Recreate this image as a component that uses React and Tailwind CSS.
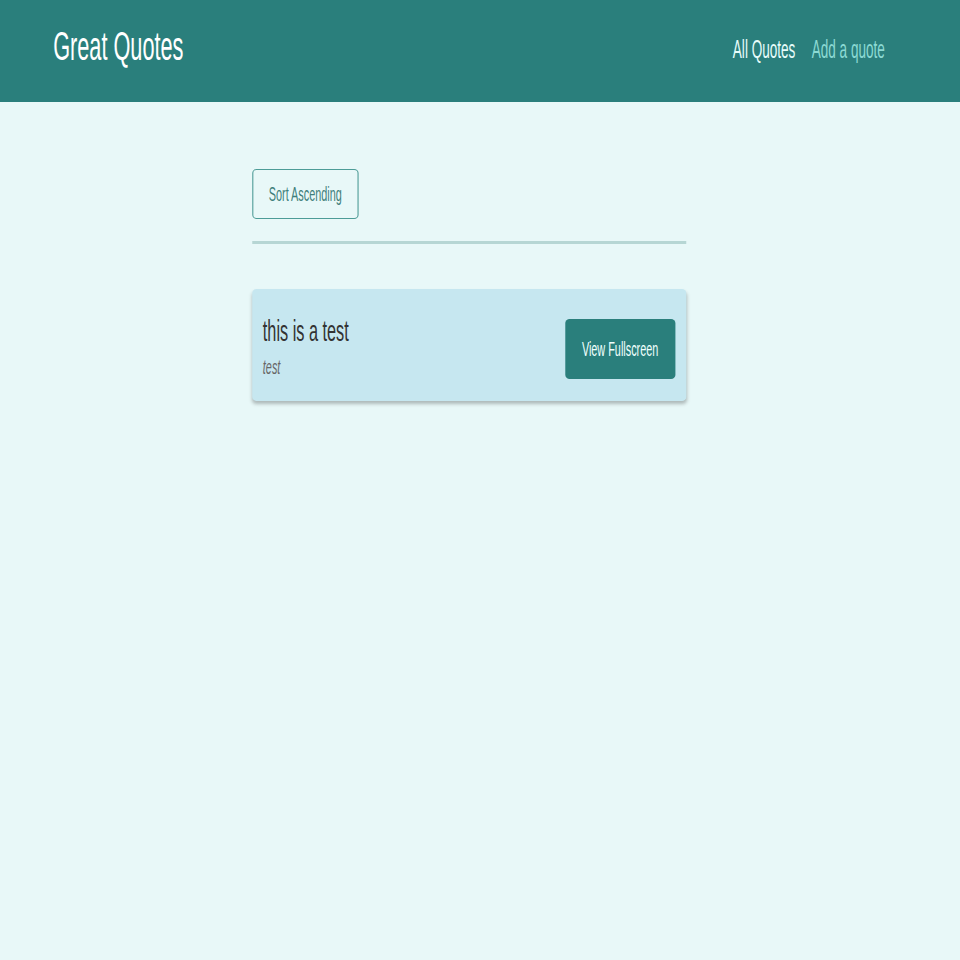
import React from "react";

const quotes = [{ id: "q1", text: "this is a test", author: "test" }];

const QuoteItem = ({ quote }) => (
  <li className="h-[112px] flex items-center justify-between pl-[20px] pr-[20px] bg-[#c6e7f0] rounded-[8px/4px] shadow-[0_3px_5px_rgba(0,0,0,0.25)]">
    <figure className="flex flex-col pt-[1px]">
      <blockquote className="text-[30px] leading-[36px] text-[#333333]">{quote.text}</blockquote>
      <figcaption className="mt-[6px] text-[20px] leading-[24px] italic text-[#666666]">
        {quote.author}
      </figcaption>
    </figure>
    <button className="mt-[8px] w-[203px] h-[60px] bg-[#2a7f7c] text-[#f0fffd] text-[20px] rounded-[8px/4px]">
      View Fullscreen
    </button>
  </li>
);

export default function App() {
  return (
    <div className="min-h-screen w-full overflow-hidden bg-[#e8f8f8] font-['Liberation_Sans',Arial,sans-serif]">
      <div className="w-[1770px] origin-top-left scale-x-[0.5425]">
        <header className="h-[102px] bg-[#2a7f7c]">
          <div className="w-[1729px] h-full flex items-center justify-between px-[98px]">
            <div className="text-[40px] leading-[48px] text-white pb-[11px]">Great Quotes</div>
            <nav className="flex items-center gap-[30px] pb-[5px]">
              <a className="text-[25px] leading-[36px] text-[#e6fcfa]">All Quotes</a>
              <a className="text-[25px] leading-[36px] text-[#8bd9d3]">Add a quote</a>
            </nav>
          </div>
        </header>
        <main className="w-[1729px]">
          <div className="w-[800px] mx-auto pt-[67px]">
            <button className="h-[50px] px-[29px] border-y border-x-2 border-[#4d9c97] rounded-[8px/4px] text-[20px] text-[#3f7f7b]">
              Sort Ascending
            </button>
            <hr className="mt-[22px] border-0 h-[3px] bg-[#b6d6d4]" />
            <ul className="mt-[45px] flex flex-col gap-4">
              {quotes.map((q) => (
                <QuoteItem key={q.id} quote={q} />
              ))}
            </ul>
          </div>
        </main>
      </div>
    </div>
  );
}
